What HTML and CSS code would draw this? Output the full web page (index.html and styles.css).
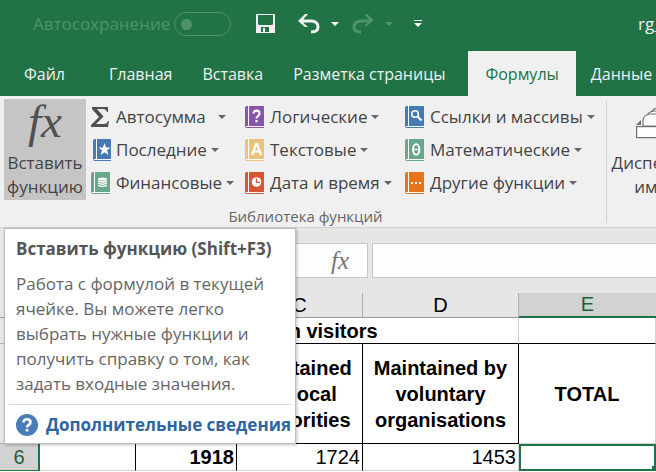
FILE: index.html
```
<!DOCTYPE html>
<html lang="ru">
<head>
<meta charset="utf-8">
<title>Excel</title>
<link rel="stylesheet" href="styles.css">
</head>
<body>
<svg class="defs" aria-hidden="true">
  <symbol id="book" viewBox="0 0 20 22">
    <path d="M2 0H19V22H2Q0 22 0 20V2Q0 0 2 0Z" fill="currentColor"/>
    <path d="M3.500 0V20.500M1 20.500H19" stroke="#fff" stroke-width="1" fill="none"/>
  </symbol>
</svg>
<header class="titlebar">
  <span class="autosave"><label for="autosave">Автосохранение</label><input id="autosave" class="toggle" type="checkbox" disabled></span>
  <button class="qat save" aria-label="Сохранить"><svg width="20" height="20" viewBox="0 0 20 20"><path fill="#f0f0f0" fill-rule="evenodd" d="M1 0H19V19H0V0ZM2 1V10L3 11H16L17 10V1ZM5 13V18H7V14H9V18H13V13Z"/></svg></button>
  <button class="qat undo" aria-label="Отменить"><svg width="22" height="20" viewBox="0 0 22 20"><path d="M3 7H13C18 7 20 10 20 13C20 16 18 18 13 18" fill="none" stroke="#f0f0f0" stroke-width="3"/><path d="M0 7L7 0H10L5.500 5V9L10 13H7Z" fill="#f0f0f0"/></svg></button>
  <button class="qat drop" aria-label="Список отмены"><svg width="8" height="5" viewBox="0 0 8 5"><path d="M0 0H8L4 4Z" fill="#fff"/></svg></button>
  <button class="qat redo" aria-label="Вернуть" disabled><svg width="22" height="20" viewBox="0 0 22 20"><path d="M19 7H10C5 7 2 9 2 13C2 16 4 18 9 18" fill="none" stroke="#4f9169" stroke-width="3"/><path d="M22 6L15 0H12L16.500 5V8L12 12H15Z" fill="#4f9169"/></svg></button>
  <button class="qat drop2" aria-label="Список возврата" disabled><svg width="8" height="5" viewBox="0 0 8 5"><path d="M0 0H8L4 4Z" fill="#4f9169"/></svg></button>
  <button class="qat more" aria-label="Настройка панели"><svg width="8" height="8" viewBox="0 0 8 8"><path d="M0 0H8V1H0ZM0 3H8L4 7Z" fill="#fff"/></svg></button>
  <span class="doc">rg_</span>
</header>
<nav class="tabs">
  <a class="tab file" href="#">Файл</a>
  <a class="tab home" href="#">Главная</a>
  <a class="tab" href="#">Вставка</a>
  <a class="tab" href="#">Разметка страницы</a>
  <a class="tab active" href="#">Формулы</a>
  <a class="tab" href="#">Данные</a>
</nav>
<section class="ribbon">
  <div class="library">
    <div class="tools">
      <button class="big pressed"><i class="fx">fx</i><span>Вставить<br>функцию</span></button>
      <div class="col c1">
        <button class="cmd auto"><svg class="ico" viewBox="0 0 20 22"><path d="M1 1H17V6H16Q15 3 12 3H6L12.500 10.500L5 18H13Q16 18 17 15H18L17 21H0V19L8 11L1 3Z" fill="#505050"/></svg><span>Автосумма</span><i class="arrow"></i></button>
        <button class="cmd"><svg class="ico blue" viewBox="-2 0 20 22"><use href="#book" width="20" height="22"/><path d="M11.500 4L13 8.500H17.500L14 11.300L15.300 16L11.500 13.200L7.700 16L9 11.300L5.500 8.500H10Z" fill="#fff"/></svg><span>Последние</span><i class="arrow"></i></button>
        <button class="cmd"><svg class="ico green" viewBox="0 0 20 22"><use href="#book" width="20" height="22"/><ellipse cx="11.500" cy="7" rx="4.500" ry="1.500" fill="#fff"/><path d="M7 9Q11.500 11 16 9M7 11.200Q11.500 13.200 16 11.200M7 13.400Q11.500 15.400 16 13.400" fill="none" stroke="#fff" stroke-width="1.400"/></svg><span>Финансовые</span><i class="arrow"></i></button>
      </div>
      <div class="col c2">
        <button class="cmd"><svg class="ico purple" viewBox="0 0 20 22"><use href="#book" width="20" height="22"/><path d="M8.500 7.500C8.500 3.500 14.500 4 14.500 7.500C14.500 10 11.500 10 11.500 12.500M11.500 14V16.300" fill="none" stroke="#fff" stroke-width="2.200"/></svg><span>Логические</span><i class="arrow"></i></button>
        <button class="cmd"><svg class="ico yellow" viewBox="0 0 20 22"><use href="#book" width="20" height="22"/><path d="M7 16L11 5H12L16 16M8.500 12.500H14.500" fill="none" stroke="#fff" stroke-width="2.200"/></svg><span>Текстовые</span><i class="arrow"></i></button>
        <button class="cmd"><svg class="ico red" viewBox="0 0 20 22"><use href="#book" width="20" height="22"/><circle cx="11.500" cy="10" r="4.800" fill="#fff"/><path d="M11.500 6.500V10.300H15" fill="none" stroke="#d65532" stroke-width="1.300"/></svg><span>Дата и время</span><i class="arrow"></i></button>
      </div>
      <div class="col c3">
        <button class="cmd"><svg class="ico blue" viewBox="0 0 20 22"><use href="#book" width="20" height="22"/><circle cx="10" cy="8" r="3.300" fill="none" stroke="#fff" stroke-width="1.600"/><path d="M12.300 10.300L16.500 14.500" stroke="#fff" stroke-width="2.200"/></svg><span>Ссылки и массивы</span><i class="arrow"></i></button>
        <button class="cmd"><svg class="ico green" viewBox="0 0 20 22"><use href="#book" width="20" height="22"/><ellipse cx="11.200" cy="10.500" rx="3.200" ry="5.300" fill="none" stroke="#fff" stroke-width="1.900"/><path d="M8 10.500H14" stroke="#fff" stroke-width="1.300"/></svg><span>Математические</span><i class="arrow"></i></button>
        <button class="cmd"><svg class="ico orange" viewBox="0 0 20 22"><use href="#book" width="20" height="22"/><path d="M6 10H8V12H6ZM10 10H12V12H10ZM14 10H16V12H14Z" fill="#fff"/></svg><span>Другие функции</span><i class="arrow"></i></button>
      </div>
    </div>
    <div class="caption">Библиотека функций</div>
  </div>
  <div class="names">
    <button class="big manager"><svg class="cards" width="40" height="40" viewBox="0 0 40 40"><g fill="#fff" stroke="#707070" stroke-width="1.200"><path d="M15 24V14Q15 8 22 7H40V24Z"/><path d="M11 24V16Q11 11 18 10H40V24Z"/><path d="M7 25V20Q7 14 14 13H40V25Z"/><rect x=".6" y="25.600" width="42" height="11"/></g><path d="M0 24L5 19V24Z" fill="#707070"/></svg><span>Диспетчер<br>имен</span></button>
  </div>
</section>
<section class="formulabar">
  <div class="fxbox"><i class="fx small">fx</i></div>
  <input class="formula" type="text" aria-label="Строка формул">
</section>
<table class="sheet">
  <colgroup><col class="w0"><col class="w1"><col class="w2"><col class="w3"><col class="w4"><col></colgroup>
  <thead><tr><th></th><th></th><th></th><th>C</th><th>D</th><th class="sel">E</th></tr></thead>
  <tbody>
    <tr class="r4"><th></th><td></td><td class="bold mid bb" colspan="3">on visitors</td><td class="bb"></td></tr>
    <tr class="r5"><th></th><td class="bb"></td><td class="bb br"></td><td class="bold mid bb br">Maintained by local authorities</td><td class="bold mid bb br">Maintained by voluntary organisations</td><td class="bold mid">TOTAL</td></tr>
    <tr class="r6"><th class="sel">6</th><td class="br"></td><td class="bold br">1918</td><td class="br">1724</td><td>1453</td><td class="cursor"></td></tr>
  </tbody>
</table>
<aside class="tip" role="tooltip">
  <h2>Вставить функцию (Shift+F3)</h2>
  <p>Работа с формулой в текущей ячейке. Вы можете легко выбрать нужные функции и получить справку о том, как задать входные значения.</p>
  <div class="help"><svg width="22" height="22" viewBox="0 0 22 22"><circle cx="11" cy="11" r="11" fill="#4a7db8"/><path d="M7.500 8.500C7.500 4 14.500 4.500 14.500 8.500C14.500 11 11 10.800 11 13.500M11 15V17.500" fill="none" stroke="#fff" stroke-width="2.600"/></svg><a href="#">Дополнительные сведения</a></div>
</aside>
</body>
</html>
```
FILE: styles.css
```
* { box-sizing: border-box; }
body {
  margin: 0;
  min-height: 100vh;
  overflow: hidden;
  position: relative;
  background: #fff;
  font-family: "Open Sans", "Noto Sans", sans-serif;
  font-size: 17px;
  line-height: 24px;
  color: #444;
}
button { font: inherit; color: inherit; border: 0; padding: 0; background: none; }
.defs { position: absolute; width: 0; height: 0; }

.titlebar { display: flex; align-items: center; height: 51px; padding: 0 0 3px 33px; background: #217346; overflow: hidden; }
.autosave { display: flex; align-items: center; gap: 4px; width: 199px; color: #4f9169; }
.toggle { appearance: none; flex: none; width: 57px; height: 24px; margin: 0; border: 1px solid #4f9169; border-radius: 12px; display: flex; align-items: center; padding-left: 6px; }
.toggle::before { content: ""; width: 11px; height: 11px; border-radius: 50%; background: #4f9169; }
.qat { display: flex; flex: none; }
.save { margin-left: 24px; }
.undo { margin-left: 22px; }
.drop { margin-left: 11px; }
.redo { margin-left: 13px; }
.drop2 { margin-left: 11px; }
.more { margin-left: 21px; }
.doc { margin-left: auto; width: 18px; white-space: nowrap; color: #f0f0f0; }

.tabs { display: flex; height: 45px; background: #217346; overflow: hidden; font-size: 16px; }
.tab { flex: none; padding: 0 15px; line-height: 46px; color: #f0f0f0; text-decoration: none; }
.file { padding-left: 24px; }
.home { padding-left: 29px; }
.active { margin-left: 8px; padding: 0 17px; background: #f0f0f0; color: #217346; }

.ribbon { display: flex; height: 132px; background: #f0f0f0; border-bottom: 1px solid #d2d2d2; overflow: hidden; }
.library { flex: none; width: 607px; padding: 3px 0 0 4px; background: linear-gradient(#d2d2d2, #d2d2d2) right 4px / 1px 123px no-repeat; }
.tools { display: flex; height: 105px; }
.big { display: flex; flex-direction: column; align-items: center; justify-content: flex-end; width: 82px; height: 101px; padding-bottom: 1px; flex: none; }
.big span { margin-top: 10px; line-height: 24px; }
.pressed { background: #c5c5c5; }
.fx { font-family: "Liberation Serif", "Times New Roman", serif; font-size: 47px; line-height: 40px; color: #505050; }
.fx.small { font-size: 25px; line-height: 24px; color: #777; }
.col { display: flex; flex-direction: column; }
.c1 { width: 154px; margin-left: 5px; }
.c2 { width: 160px; }
.cmd { display: flex; align-items: center; height: 33px; padding-top: 2px; white-space: nowrap; }
.ico { width: 20px; height: 22px; margin-right: 5px; flex: none; }
.arrow { width: 0; height: 0; margin-left: 4px; border: 4px solid transparent; border-top-color: #666; border-bottom: 0; }
.auto .arrow { margin-left: 12px; }
.blue { color: #457ab4; }
.green { color: #68a78b; }
.purple { color: #8855aa; }
.yellow { color: #e9c27d; }
.red { color: #d65532; }
.orange { color: #e2751d; }
.caption { text-align: center; font-size: 15px; color: #666; }
.names { padding: 3px 0 0 6px; }
.manager { width: 86px; }

.formulabar { display: flex; gap: 4px; height: 65px; padding: 15px 0 15px 4px; background: #e6e6e6; }
.fxbox { display: flex; align-items: center; justify-content: flex-end; flex: none; width: 364px; padding-right: 18px; background: #fdfdfd; border: 1px solid #c6c6c6; }
.formula { flex: 1; min-width: 0; background: #fdfdfd; border: 1px solid #c6c6c6; border-right: 0; }

.sheet { width: 100%; table-layout: fixed; border-collapse: separate; border-spacing: 0; font-family: "Liberation Sans", Arial, sans-serif; font-size: 20px; line-height: 26px; color: #000; }
.w0 { width: 40px; }
.w1 { width: 96px; }
.w2 { width: 101px; }
.w3 { width: 126px; }
.w4 { width: 156px; }
.sheet th, .sheet td { padding: 0; border: 0 solid #d4d4d4; border-width: 0 1px 1px 0; }
.sheet th { font-weight: 400; background: #e6e6e6; border-color: #b0b0b0; }
.sheet thead th { height: 25px; line-height: 23px; border-bottom-color: #999; }
.sheet th.sel { background: #d2d2d2; color: #1d603b; border-color: #217346; }
.sheet thead th.sel { border-width: 0 0 2px; }
.sheet tbody th.sel { border-right-width: 2px; }
.sheet td { text-align: right; padding-right: 2px; }
.sheet .bold { font-weight: 700; }
.sheet .mid { text-align: center; padding: 0 8px; }
.sheet .bb { border-bottom-color: #000; }
.sheet .br { border-right-color: #000; }
.r4 { height: 26px; line-height: 24px; }
.r5 { height: 100px; }
.r6 { height: 27px; line-height: 25px; }
.sheet .cursor { border: 2px solid #217346; background: linear-gradient(#217346, #217346) right bottom / 2px 3px no-repeat; }

.tip { position: absolute; left: 4px; top: 228px; width: 292px; padding: 8px 4px 6px; background: #fff; border: 1px solid #bebebe; box-shadow: 1px 1px 3px rgba(0, 0, 0, .25); color: #666; }
.tip h2 { margin: 0 0 10px; padding-left: 7px; font-size: 17px; line-height: 24px; color: #555; white-space: nowrap; }
.tip p { margin: 0 0 8px; padding: 0 7px; line-height: 25px; }
.help { display: flex; align-items: center; gap: 8px; padding: 8px 0 0 7px; border-top: 1px solid #dcdcdc; }
.help a { font-weight: 700; color: #2f65a0; text-decoration: none; white-space: nowrap; }
```
